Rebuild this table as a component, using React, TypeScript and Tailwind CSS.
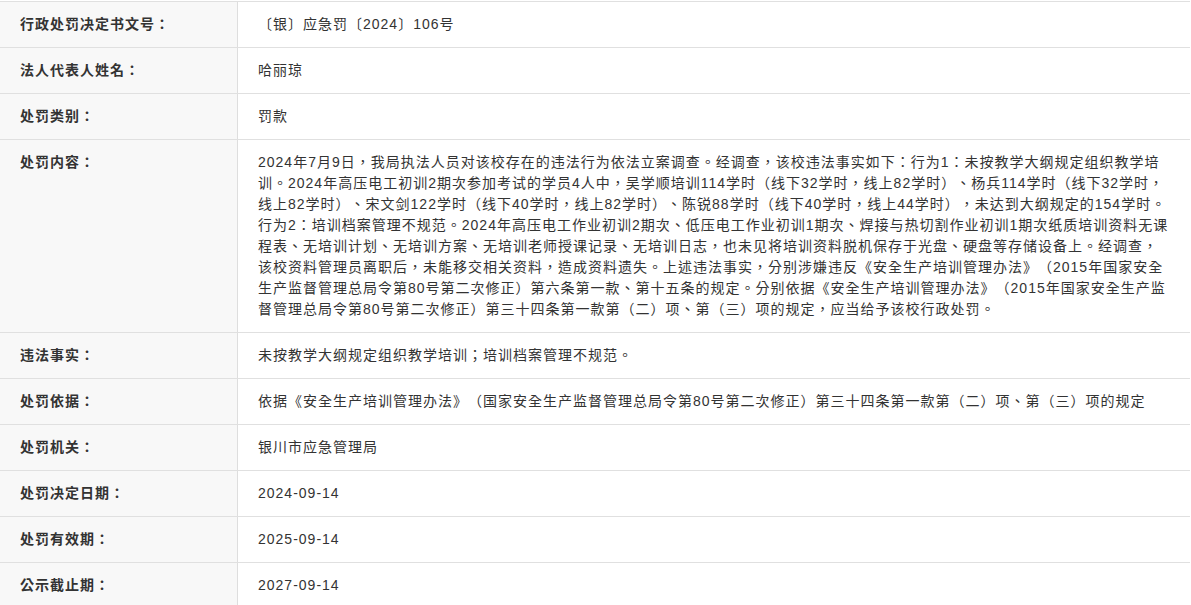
import React from "react";

const rows: { label: string; value: string }[] = [
  { label: "行政处罚决定书文号：", value: "〔银〕应急罚〔2024〕106号" },
  { label: "法人代表人姓名：", value: "哈丽琼" },
  { label: "处罚类别：", value: "罚款" },
  {
    label: "处罚内容：",
    value:
      "2024年7月9日，我局执法人员对该校存在的违法行为依法立案调查。经调查，该校违法事实如下：行为1：未按教学大纲规定组织教学培训。2024年高压电工初训2期次参加考试的学员4人中，吴学顺培训114学时（线下32学时，线上82学时）、杨兵114学时（线下32学时，线上82学时）、宋文剑122学时（线下40学时，线上82学时）、陈锐88学时（线下40学时，线上44学时），未达到大纲规定的154学时。行为2：培训档案管理不规范。2024年高压电工作业初训2期次、低压电工作业初训1期次、焊接与热切割作业初训1期次纸质培训资料无课程表、无培训计划、无培训方案、无培训老师授课记录、无培训日志，也未见将培训资料脱机保存于光盘、硬盘等存储设备上。经调查，该校资料管理员离职后，未能移交相关资料，造成资料遗失。上述违法事实，分别涉嫌违反《安全生产培训管理办法》（2015年国家安全生产监督管理总局令第80号第二次修正）第六条第一款、第十五条的规定。分别依据《安全生产培训管理办法》（2015年国家安全生产监督管理总局令第80号第二次修正）第三十四条第一款第（二）项、第（三）项的规定，应当给予该校行政处罚。",
  },
  { label: "违法事实：", value: "未按教学大纲规定组织教学培训；培训档案管理不规范。" },
  {
    label: "处罚依据：",
    value:
      "依据《安全生产培训管理办法》（国家安全生产监督管理总局令第80号第二次修正）第三十四条第一款第（二）项、第（三）项的规定",
  },
  { label: "处罚机关：", value: "银川市应急管理局" },
  { label: "处罚决定日期：", value: "2024-09-14" },
  { label: "处罚有效期：", value: "2025-09-14" },
  { label: "公示截止期：", value: "2027-09-14" },
];

export default function App() {
  return (
    <div
      className="w-[1191px] h-[605px] overflow-hidden bg-white pt-px text-[14px] leading-[21px] tracking-[1px] text-[#333333] [text-spacing-trim:space-all]"
      style={{ fontFamily: '"Liberation Sans", "Noto Sans CJK TC", "Noto Sans CJK SC", sans-serif' }}
    >
      <div className="w-[1190px] border-t border-[#e0e0e0]">
        {rows.map((r) => (
          <div key={r.label} className="flex border-b border-[#e0e0e0]">
            <div className="w-[238px] shrink-0 border-r border-[#dedede] bg-[#f8f8f8] py-3 pl-5 font-bold">
              {r.label}
            </div>
            <div className="flex-1 py-3 pl-5 pr-5">{r.value}</div>
          </div>
        ))}
      </div>
    </div>
  );
}
